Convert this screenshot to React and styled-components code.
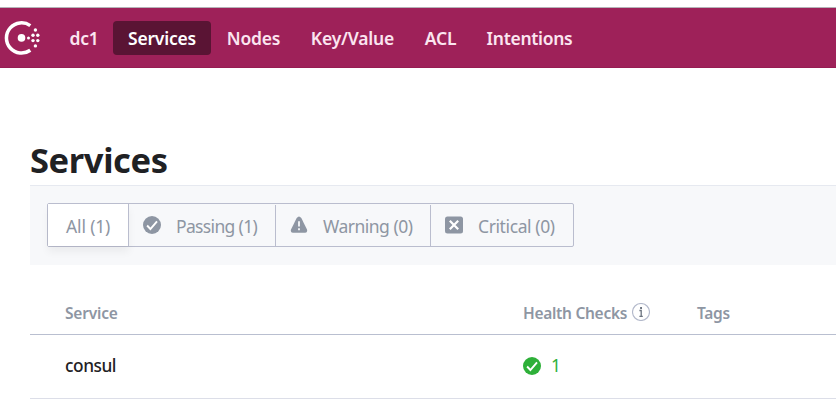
import React from 'react';
import styled, { createGlobalStyle } from 'styled-components';

const GlobalStyle = createGlobalStyle`
  * { box-sizing: border-box; }
  body {
    margin: 0;
    background: #fff;
    color: #1f2124;
    font-family: "Segoe UI", "Noto Sans", sans-serif;
    overflow: hidden;
  }
  h1 { margin: 0; }
  svg { display: block; flex: none; }
`;

const Page = styled.div`
  width: 836px;
  height: 410px;
  padding-top: 7px;
  overflow: hidden;
`;

const Header = styled.header`
  display: flex;
  align-items: center;
  height: 61px;
  padding-left: 4px;
  background: #9e2159;
  border-top: 1px solid #b5b3b8;
  border-bottom: 1px solid #961c52;
`;

const Nav = styled.nav`
  display: flex;
  gap: 1px;
  margin-left: 15px;
`;

const NavItem = styled.a`
  display: flex;
  align-items: center;
  justify-content: center;
  width: ${(p) => p.$width}px;
  height: 34px;
  padding-left: ${(p) => p.$nudge || 0}px;
  border-radius: 4px;
  background: ${(p) => (p.$active ? '#5a1434' : 'transparent')};
  color: ${(p) => (p.$active ? '#fff' : '#fbe5f0')};
  font-size: 17.5px;
  font-weight: 600;
  letter-spacing: ${(p) => p.$tracking}px;
  white-space: nowrap;
`;

const Main = styled.main`
  padding-left: 30px;
`;

const Title = styled.h1`
  height: 117px;
  padding-top: 68px;
  font-size: 34.5px;
  line-height: 48px;
  font-weight: 700;
  letter-spacing: -0.4px;
`;

const FilterBar = styled.div`
  height: 80px;
  padding: 17px 0 0 17px;
  background: #f7f8fa;
  border-top: 1px solid #e6e9f0;
`;

const FilterGroup = styled.div`
  display: flex;
  width: 527px;
  height: 44px;
  padding-top: 1px;
  border: 1px solid #babdce;
  border-radius: 2px;
`;

const Filter = styled.button`
  display: flex;
  align-items: center;
  width: ${(p) => p.$width}px;
  padding: ${(p) => (p.$active ? 2 : 1)}px 0 0 ${(p) => p.$inset}px;
  border: 0;
  border-right: ${(p) => (p.$last ? '0' : '1px solid #babdce')};
  margin-top: ${(p) => (p.$active ? '-1px' : '0')};
  background: ${(p) => (p.$active ? '#fff' : 'transparent')};
  box-shadow: ${(p) => (p.$active ? '0 6px 8px rgba(0, 0, 0, 0.05)' : 'none')};
  color: #8e96a3;
  font: 400 17.5px "Segoe UI", "Noto Sans", sans-serif;
  letter-spacing: ${(p) => p.$tracking}px;
  white-space: nowrap;

  svg { margin: -2px ${(p) => p.$gap}px 0 0; }
`;

const Row = styled.div`
  display: grid;
  grid-template-columns: 458px 174px 1fr;
  align-items: center;
  padding-left: 35px;
`;

const HeadRow = styled(Row)`
  height: 70px;
  padding-top: 27px;
  border-bottom: 1px solid #b9bfd0;
  color: #8e96a3;
  font-size: 15.5px;
  line-height: 22px;
  font-weight: 600;
`;

const BodyRow = styled(Row)`
  height: 64px;
  padding-bottom: 2px;
  border-bottom: 1px solid #dcdee8;
  font-size: 17.3px;
`;

const Cell = styled.div`
  display: flex;
  align-items: center;
  letter-spacing: ${(p) => p.$tracking || 0}px;
  white-space: nowrap;
  svg { margin: -3px 0 0 5px; }
`;

const ServiceName = styled(Cell)`
  font-weight: 500;
`;

const PassingCount = styled(Cell)`
  gap: 10px;
  color: #2eb039;
  svg { margin: 0; }
`;

const Logo = () => (
  <svg width="36" height="36" viewBox="0 0 36 36" fill="#fff">
    <path d="M26.3 5.6A15.1 15.1 0 1 0 26.3 30.2" fill="none" stroke="#fff" strokeWidth="3.5" />
    <circle cx="17.5" cy="17.9" r="3.8" />
    <circle cx="24.5" cy="17.9" r="1.5" />
    <circle cx="29" cy="15.2" r="1.7" />
    <circle cx="29" cy="20.6" r="1.7" />
    <circle cx="33.8" cy="15.2" r="1.7" />
    <circle cx="33.8" cy="20.6" r="1.7" />
    <circle cx="31.4" cy="10" r="1.7" />
    <circle cx="31.4" cy="25.9" r="1.7" />
  </svg>
);

const CheckIcon = ({ color }) => (
  <svg width="18" height="18" viewBox="0 0 18 18">
    <circle cx="9" cy="9" r="9" fill={color} />
    <path d="M4.1 9.5L7.4 13L14 5.3" fill="none" stroke="#fff" strokeWidth="1.9" />
  </svg>
);

const WarningIcon = () => (
  <svg width="18" height="18" viewBox="0 0 18 18">
    <path d="M6.7 2Q9 -1.1 11.3 2L17 13.4Q17.8 16.6 15.2 16.7H2.8Q0.2 16.6 1 13.4Z" fill="#8e96a3" />
    <path d="M9 5.2V10.4M9 12.2V14.2" stroke="#f7f8fa" strokeWidth="1.8" />
  </svg>
);

const CriticalIcon = () => (
  <svg width="18" height="18" viewBox="0 0 18 18">
    <rect y="0.5" width="18" height="17" rx="2.5" fill="#8e96a3" />
    <path d="M4.8 4.7L13.2 13.3M13.2 4.7L4.8 13.3" stroke="#fff" strokeWidth="2.2" />
  </svg>
);

const InfoIcon = () => (
  <svg width="18" height="18" viewBox="0 0 18 18">
    <circle cx="9" cy="9" r="8.5" fill="#fff" stroke="#b3b9cb" strokeWidth="1.1" />
    <path d="M7.4 7.5H9.2V13.2M7.4 13.4H10.8" fill="none" stroke="#6c7480" strokeWidth="1.3" />
    <rect x="8.1" y="4" width="1.9" height="2" fill="#6c7480" />
  </svg>
);

const navItems = [
  { label: 'dc1', width: 57, tracking: -0.3, nudge: 1 },
  { label: 'Services', width: 98, tracking: -0.2, active: true },
  { label: 'Nodes', width: 83, tracking: -0.2 },
  { label: 'Key/Value', width: 113, tracking: -0.2 },
  { label: 'ACL', width: 61, tracking: -0.2 },
  { label: 'Intentions', width: 115, tracking: -0.3 },
];

const filters = [
  { label: 'All (1)', width: 81, inset: 18, gap: 0, tracking: -0.15, active: true },
  { label: 'Passing (1)', icon: <CheckIcon color="#8e96a3" />, width: 147, inset: 14, gap: 15, tracking: -0.65 },
  { label: 'Warning (0)', icon: <WarningIcon />, width: 155, inset: 14, gap: 15, tracking: -0.5 },
  { label: 'Critical (0)', icon: <CriticalIcon />, width: 142, inset: 14, gap: 15, tracking: -0.4, last: true },
];

export default function App() {
  return (
    <Page>
      <GlobalStyle />
      <Header>
        <Logo />
        <Nav>
          {navItems.map((n) => (
            <NavItem
              key={n.label}
              $width={n.width}
              $tracking={n.tracking}
              $nudge={n.nudge}
              $active={n.active}
            >
              {n.label}
            </NavItem>
          ))}
        </Nav>
      </Header>
      <Main>
        <Title>Services</Title>
        <FilterBar>
          <FilterGroup>
            {filters.map((f) => (
              <Filter
                key={f.label}
                $width={f.width}
                $inset={f.inset}
                $gap={f.gap}
                $tracking={f.tracking}
                $active={f.active}
                $last={f.last}
              >
                {f.icon}
                {f.label}
              </Filter>
            ))}
          </FilterGroup>
        </FilterBar>
        <HeadRow>
          <Cell $tracking={-0.2}>Service</Cell>
          <Cell $tracking={-0.29}>
            Health Checks
            <InfoIcon />
          </Cell>
          <Cell $tracking={-0.3}>Tags</Cell>
        </HeadRow>
        <BodyRow>
          <ServiceName $tracking={-0.45}>consul</ServiceName>
          <PassingCount>
            <CheckIcon color="#2eb039" />
            1
          </PassingCount>
        </BodyRow>
      </Main>
    </Page>
  );
}
